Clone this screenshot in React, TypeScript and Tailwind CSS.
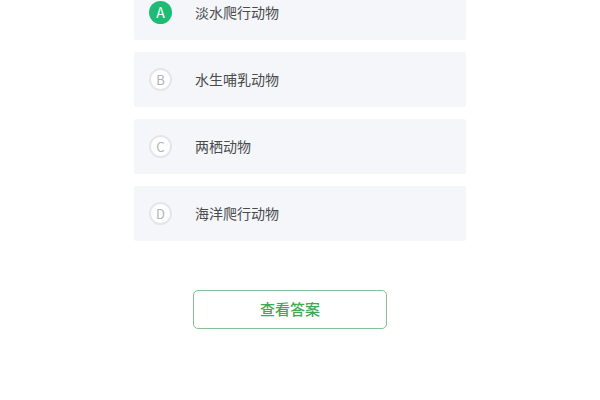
const options = [
  { key: "A", label: "淡水爬行动物", active: true },
  { key: "B", label: "水生哺乳动物" },
  { key: "C", label: "两栖动物" },
  { key: "D", label: "海洋爬行动物" },
];

export default function App() {
  return (
    <div
      className="w-[600px] h-[400px] overflow-hidden bg-white"
      style={{ fontFamily: '"Noto Sans CJK SC", "Noto Sans", sans-serif' }}
    >
      <div className="mt-[-15px] ml-[134px] w-[332px] flex flex-col gap-3">
        {options.map((o) => (
          <div key={o.key} className="h-[55px] bg-[#f4f6fa] rounded-[2px] flex items-center px-[15px]">
            <span
              className={
                o.active
                  ? "w-[23px] h-[23px] rounded-full bg-[#1dbb73] text-white text-[14px] flex items-center justify-center"
                  : "w-[23px] h-[23px] rounded-full border-2 border-[#e4e6ea] bg-white text-[#b0b3b8] text-[13px] flex items-center justify-center"
              }
            >
              {o.key}
            </span>
            <span className="ml-[23px] text-[14px] text-[#4a4a4a]">{o.label}</span>
          </div>
        ))}
      </div>
      <div className="mt-[49px] ml-[193px] w-[194px] h-[39px] rounded-[5px] border-[1.5px] border-[#86bf92] flex items-center justify-center text-[15px] font-medium text-[#3ea852]">
        查看答案
      </div>
    </div>
  );
}
